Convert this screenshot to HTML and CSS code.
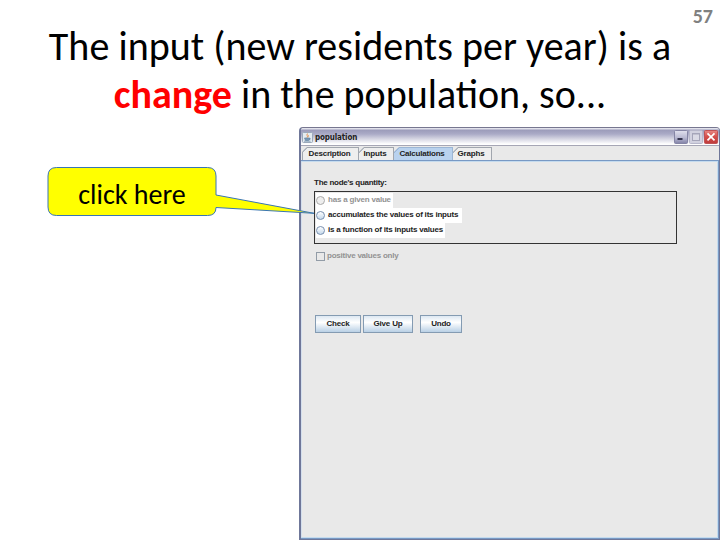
FILE: index.html
```html
<!DOCTYPE html>
<html lang="en">
<head>
<meta charset="utf-8">
<title>population</title>
<link rel="stylesheet" href="styles.css">
</head>
<body>
<main class="slide">
  <div class="page-number">57</div>
  <h1 class="title">
    <span class="line first">The input (new residents per year) is a</span>
    <span class="line second"><b>change</b> in the population, so...</span>
  </h1>
  <section class="window">
    <header class="titlebar">
      <svg class="java" viewBox="0 0 11 11"><rect x=".5" y=".5" width="10" height="10" rx="1" fill="#e4ebf0" stroke="#9ba9ba"/><path d="M6 1.500C3.500 3 6.500 4 5 5.500M7 3.200C5.700 4 6.500 4.500 5.800 5.400" fill="none" stroke="#e39350"/><path d="M2.500 6h5v1.500l-1 1h-3zM7.500 6.300c1.500 0 1 1.400-.5 1.400M2 9.200h6.500" fill="#7898b6" stroke="#6686a5" stroke-width=".7"/></svg>
      <span class="caption">population</span>
      <div class="controls">
        <svg viewBox="0 0 14 14"><defs><linearGradient id="g1" x2="0" y2="1"><stop stop-color="#e2e2ef"/><stop offset=".55" stop-color="#b9b9d2"/><stop offset="1" stop-color="#8282a7"/></linearGradient></defs><rect x=".5" y=".5" width="13" height="13" rx="1" fill="url(#g1)" stroke="#8585a5"/><path d="M3.500 9h5" stroke="#35354f" stroke-width="2"/></svg>
        <svg viewBox="0 0 14 14"><rect x=".5" y=".5" width="13" height="13" rx="1" fill="#d1d1df" stroke="#b7b7ca"/><rect x="3.500" y="3.500" width="7" height="7" fill="#dadae5" stroke="#a5a5b9"/><path d="M3 4h8" stroke="#a5a5b9"/></svg>
        <svg viewBox="0 0 14 14"><defs><linearGradient id="g2" x2="0" y2="1"><stop stop-color="#e88884"/><stop offset=".5" stop-color="#d34c48"/><stop offset="1" stop-color="#bd3c3d"/></linearGradient></defs><rect x=".5" y=".5" width="13" height="13" rx="1" fill="url(#g2)" stroke="#c05255"/><path d="M3.500 3.300l7 7M10.500 3.300l-7 7" stroke="#fff" stroke-width="1.700"/></svg>
      </div>
    </header>
    <nav class="tabs">
      <span class="tab t1">Description</span><span class="tab t2">Inputs</span><span class="tab t3 active">Calculations</span><span class="tab t4">Graphs</span>
    </nav>
    <div class="panel">
      <div class="label">The node's quantity:</div>
      <div class="options">
        <div class="option o1 disabled"><i class="radio"></i><span>has a given value</span></div>
        <div class="option o2"><i class="radio"></i><span>accumulates the values of its inputs</span></div>
        <div class="option o3"><i class="radio"></i><span>is a function of its inputs values</span></div>
      </div>
      <div class="check"><i class="box"></i><span>positive values only</span></div>
      <div class="buttons"><span class="button b1">Check</span><span class="button b2">Give Up</span><span class="button b3">Undo</span></div>
    </div>
  </section>
  <div class="callout">
    <svg viewBox="0 0 280 52"><path d="M9.500 1.500H160.500Q169 1.500 169 10V29L267 47.300L169 41.500Q169 49.500 160.500 49.500H9.500Q1 49.500 1 41V10Q1 1.500 9.500 1.500Z" fill="#ff0" stroke="#3975b4"/></svg>
    <span>click here</span>
  </div>
</main>
</body>
</html>
```
FILE: styles.css
```css
* { box-sizing: border-box; }
body { margin: 0; background: #fff; }
.slide { position: relative; width: 720px; height: 540px; overflow: hidden; font-family: Carlito, Lato, sans-serif; color: #000; }
.page-number { position: absolute; right: 7px; top: 5px; font-size: 20px; line-height: 22px; font-weight: bold; color: #808080; }
.title { margin: 0; padding-top: 23px; height: 127px; font-size: 40px; line-height: 48px; font-weight: normal; }
.line { display: block; width: 720px; text-align: center; white-space: nowrap; }
.first { letter-spacing: 0.03px; }
.title b { color: #f00; }
.window { margin-left: 299px; width: 421px; height: 413px; display: flex; flex-direction: column; border: solid #6f7799; border-width: 1px 1px 1px 2px; border-top-color: #777790; border-radius: 4px 4px 0 0; background: #e9e9e9; font: bold 8px/10px "Liberation Sans", sans-serif; letter-spacing: -0.2px; color: #222; white-space: nowrap; }
.titlebar { height: 18px; flex: none; display: flex; align-items: center; padding: 1px 1px 0 1px; border-bottom: 1px solid #a6a6b5; border-radius: 3px 3px 0 0; background: linear-gradient(#f4f4f8 0, #9d9dbb 14%, #aaaac6 35%, #d6d6e3 65%, #fff 94%); }
.java { width: 11px; height: 11px; }
.caption { margin: 1px 0 0 2px; font: bold 8px/12px "DejaVu Sans Condensed", "DejaVu Sans", sans-serif; letter-spacing: -0.15px; }
.controls { margin-left: auto; display: flex; gap: 1px; }
.controls svg { width: 14px; height: 14px; }
.tabs { height: 14px; flex: none; display: flex; padding: 1px 0 0 1px; }
.tab { height: 13px; line-height: 11px; padding-right: 2px; text-align: center; border: 1px solid #a1a6ae; border-left: 0; border-bottom: 0; background: linear-gradient(135deg, #8e98a5 4px, #eee 4.8px) border-box; clip-path: polygon(0 5px, 5px 0, 100% 0, 100% 100%, 0 100%); }
.t1 { width: 57px; border-left: 1px solid #a1a6ae; }
.t2 { width: 35px; }
.t3 { width: 59px; }
.t4 { width: 39px; }
.tab.active { background: linear-gradient(135deg, #8aa9cf 4px, #b9d2ee 4.8px) border-box; border-color: #9cb6d5; }
.panel { flex: 1; border: 1px solid #7899c4; border-width: 1px 1px 1px 0; box-shadow: inset 0 1px #c5dbee, inset -1px -1px #c5dbee, inset 1px 0 #d4dfed; padding: 17px 0 0 13px; background: #e9e9e9; }
.label { height: 13px; letter-spacing: -0.26px; }
.options { width: 363px; height: 53px; border: 1px solid #333; padding: 1px 0 0 1px; }
.option { height: 15px; display: flex; align-items: center; background: #fff; padding: 0 0 1px 1px; }
.o1 { width: 77px; }
.o2 { width: 146px; }
.o3 { width: 129px; }
.option span { margin-left: 3px; }
.radio { width: 9px; height: 9px; flex: none; margin-left: -1px; border: 1px solid #7890b0; border-radius: 50%; background: linear-gradient(#fff, #c4d8eb); }
.disabled { color: #929292; }
.disabled .radio { border-color: #aaa; background: #eee; }
.check { margin: 7px 0 0 2px; height: 10px; display: flex; align-items: center; color: #929292; letter-spacing: -0.23px; }
.box { width: 9px; height: 9px; border: 1px solid #929ca7; }
.check span { margin-left: 2px; }
.buttons { display: flex; margin: 54px 0 0 1px; }
.button { height: 18px; border: 1px solid #849bb2; text-align: center; line-height: 15px; background: linear-gradient(#dde8f2, #fff 40%, #b9d0e5); }
.b1 { width: 46px; }
.b2 { width: 50px; margin-left: 2px; }
.b3 { width: 42px; margin-left: 7px; }
.callout { position: absolute; left: 47px; top: 166px; width: 280px; height: 52px; }
.callout svg { position: absolute; inset: 0; width: 280px; height: 52px; }
.callout span { position: relative; display: block; width: 170px; padding-top: 13px; text-align: center; font-size: 28px; line-height: 32px; }
```
